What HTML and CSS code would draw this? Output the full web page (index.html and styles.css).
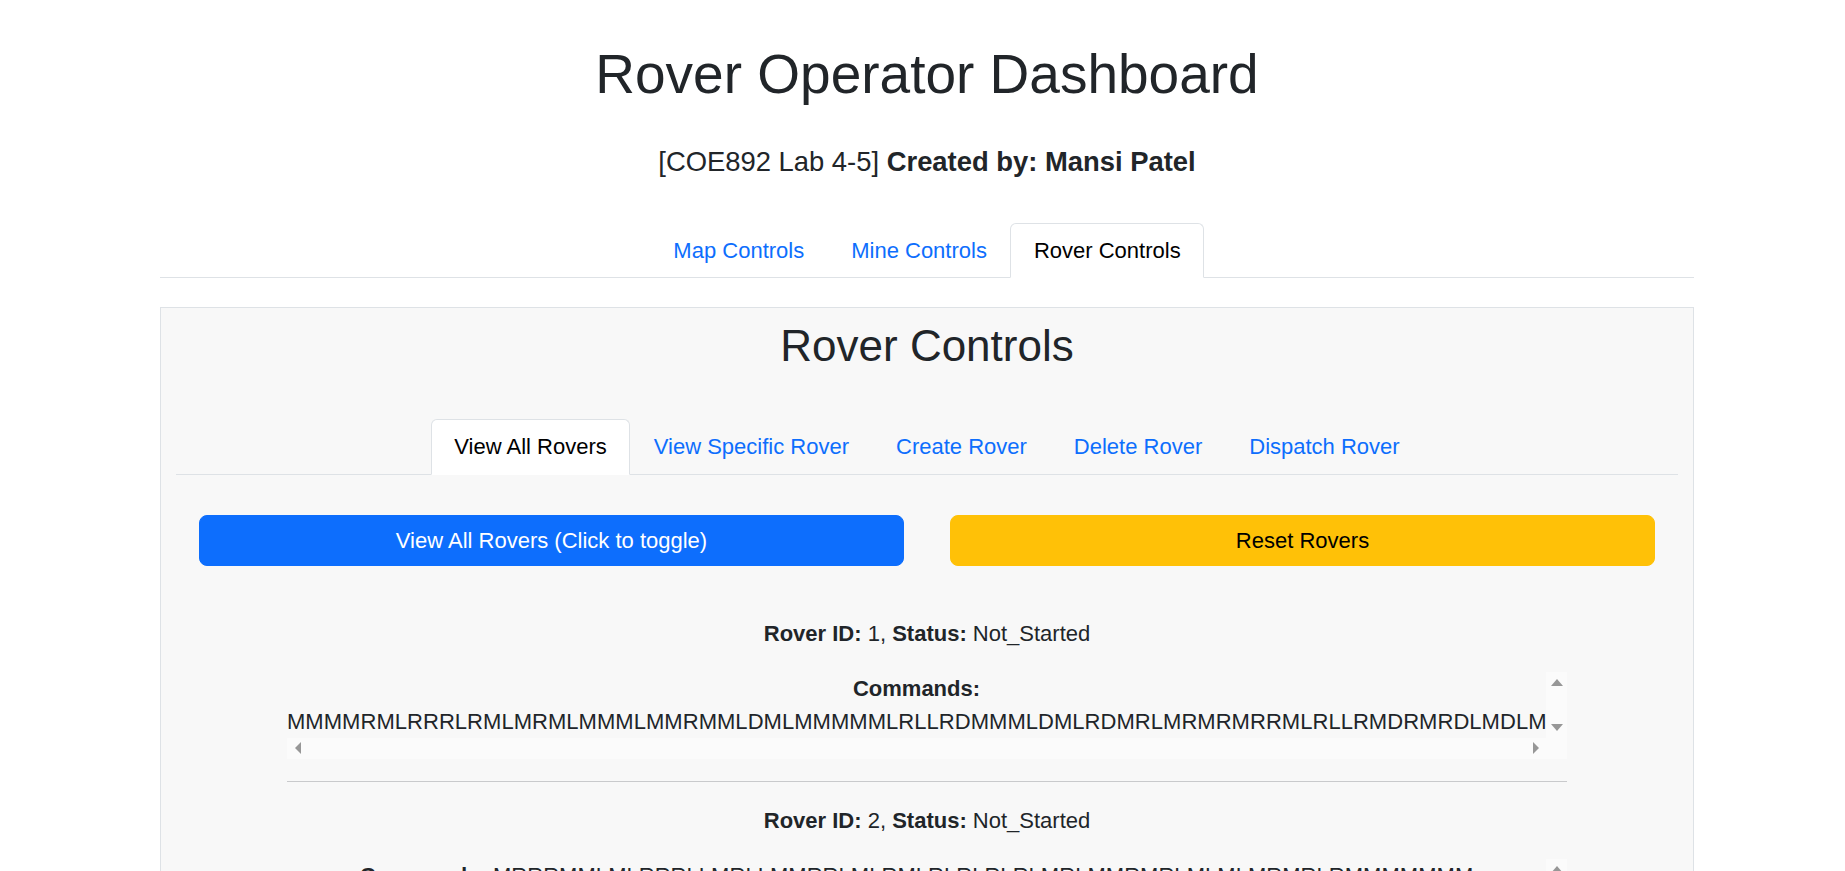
FILE: index.html
```html
<!DOCTYPE html>
<html lang="en">
<head>
<meta charset="utf-8">
<title>Rover Operator Dashboard</title>
<link rel="stylesheet" href="styles.css">
</head>
<body>
<div class="page">
  <header class="header">
    <h1 class="title">Rover Operator Dashboard</h1>
    <p class="subtitle">[COE892 Lab 4-5] <strong>Created by: Mansi Patel</strong></p>
  </header>
  <ul class="tabs">
    <li><a class="tab" href="#">Map Controls</a></li>
    <li><a class="tab" href="#">Mine Controls</a></li>
    <li><a class="tab active" href="#">Rover Controls</a></li>
  </ul>
  <section class="panel">
    <h2 class="panel-title">Rover Controls</h2>
    <ul class="tabs tabs-sub">
      <li><a class="tab active" href="#">View All Rovers</a></li>
      <li><a class="tab" href="#">View Specific Rover</a></li>
      <li><a class="tab" href="#">Create Rover</a></li>
      <li><a class="tab" href="#">Delete Rover</a></li>
      <li><a class="tab" href="#">Dispatch Rover</a></li>
    </ul>
    <div class="actions">
      <button class="btn btn-primary" type="button">View All Rovers (Click to toggle)</button>
      <button class="btn btn-warning" type="button">Reset Rovers</button>
    </div>
    <div class="rover-list">
      <div class="rover">
        <p class="rover-id"><strong>Rover ID:</strong> 1, <strong>Status:</strong> Not_Started</p>
        <div class="cmd-box">
          <div class="cmd-view"><p><strong>Commands:</strong> <span class="cmd-str">MMMMRMLRRRLRMLMRMLMMMLMMRMMLDMLMMMMMLRLLRDMMMLDMLRDMRLMRMRMRRMLRLLRMDRMRDLMDLMRMMLMRDLMMRLMLRRM</span></p></div>
          <div class="vbar"><span class="sb-btn"><span class="arr arr-up"></span></span><span class="sb-btn"><span class="arr arr-down"></span></span></div>
          <div class="hbar"><span class="sb-btn"><span class="arr arr-left"></span></span><span class="sb-btn"><span class="arr arr-right"></span></span></div>
          <div class="corner"></div>
        </div>
        <hr class="sep">
      </div>
      <div class="rover">
        <p class="rover-id"><strong>Rover ID:</strong> 2, <strong>Status:</strong> Not_Started</p>
        <div class="cmd-box">
          <div class="cmd-view"><p><strong>Commands:</strong> <span class="cmd-str">MRRRMMLMLRRRLLMRLLMMRRLMLRMLRLRLRLRLMRLMMRMRLMLMLMRMRLRMMMMMMM</span></p></div>
          <div class="vbar"><span class="sb-btn"><span class="arr arr-up"></span></span><span class="sb-btn"><span class="arr arr-down"></span></span></div>
          <div class="hbar"><span class="sb-btn"><span class="arr arr-left"></span></span><span class="sb-btn"><span class="arr arr-right"></span></span></div>
          <div class="corner"></div>
        </div>
        <hr class="sep">
      </div>
    </div>
  </section>
</div>
</body>
</html>
```

FILE: styles.css
```css
html, body {
  margin: 0;
  padding: 0;
  background: #ffffff;
  height: 871px;
  overflow: hidden;
}

body {
  font-family: "Liberation Sans", Arial, sans-serif;
  color: #212529;
}

.page {
  width: 1534px;
  margin-left: 160px;
}

.header {
  text-align: center;
  padding-top: 41px;
}

.title {
  font-size: 55px;
  font-weight: 400;
  line-height: 1.2;
  margin: 0 0 39px;
}

.subtitle {
  font-size: 27.4px;
  line-height: 1.2;
  margin: 0 0 44px;
}

.subtitle strong {
  font-weight: 700;
}

.tabs {
  list-style: none;
  margin: 0;
  padding: 0;
  display: flex;
  justify-content: center;
  border-bottom: 1px solid #dee2e6;
}

.tab {
  display: block;
  font-size: 22px;
  line-height: 33px;
  padding: 10px 22.5px;
  border: 1px solid transparent;
  border-top-left-radius: 6px;
  border-top-right-radius: 6px;
  margin-bottom: -1px;
  color: #0d6efd;
  text-decoration: none;
}

.tabs-sub .tab {
  padding-top: 10.5px;
  padding-bottom: 10.5px;
}

.tab.active {
  color: #000000;
  background: #ffffff;
  border-color: #dee2e6 #dee2e6 #ffffff;
}

.panel {
  margin-top: 29px;
  border: 1px solid #dee2e6;
  background: #f8f8f8;
  padding: 12px 15px 40px;
}

.panel-title {
  font-size: 44px;
  font-weight: 400;
  line-height: 1.2;
  margin: 0 0 46px;
  text-align: center;
}

.actions {
  display: grid;
  grid-template-columns: 1fr 1fr;
  gap: 46px;
  padding: 0 23px;
  margin-top: 40px;
}

.btn {
  font-family: "Liberation Sans", Arial, sans-serif;
  font-size: 22px;
  line-height: 33px;
  padding: 8px 12px;
  border: 1px solid;
  border-radius: 8px;
}

.btn-primary {
  background: #0d6efd;
  border-color: #0d6efd;
  color: #ffffff;
}

.btn-warning {
  background: #ffc107;
  border-color: #ffc107;
  color: #000000;
}

.rover-list {
  width: 1280px;
  margin: 51px auto 0;
  text-align: center;
}

.rover-id {
  font-size: 22px;
  line-height: 33px;
  margin: 0 0 22px;
}

.cmd-box {
  height: 87px;
  display: grid;
  grid-template-columns: minmax(0, 1fr) 21px;
  grid-template-rows: minmax(0, 1fr) 21px;
  font-size: 22px;
  line-height: 33px;
}

.cmd-view {
  overflow: hidden;
  text-align: center;
}

.cmd-view p {
  margin: 0 0 16px;
}

.cmd-str {
  letter-spacing: 0.04px;
}

.vbar {
  display: flex;
  flex-direction: column;
  justify-content: space-between;
  background: #fbfbfb;
}

.hbar {
  display: flex;
  justify-content: space-between;
  background: #fbfbfb;
}

.corner {
  background: #fbfbfb;
}

.sb-btn {
  width: 21px;
  height: 21px;
  display: flex;
  align-items: center;
  justify-content: center;
}

.arr {
  display: block;
  width: 0;
  height: 0;
}

.arr-up {
  border-left: 6px solid transparent;
  border-right: 6px solid transparent;
  border-bottom: 7px solid #979797;
}

.arr-down {
  border-left: 6px solid transparent;
  border-right: 6px solid transparent;
  border-top: 7px solid #979797;
}

.arr-left {
  border-top: 6px solid transparent;
  border-bottom: 6px solid transparent;
  border-right: 6.5px solid #979797;
}

.arr-right {
  border-top: 6px solid transparent;
  border-bottom: 6px solid transparent;
  border-left: 6.5px solid #979797;
}

.sep {
  border: 0;
  border-top: 1px solid #c9cacc;
  margin: 22px 0 22px;
}
```
